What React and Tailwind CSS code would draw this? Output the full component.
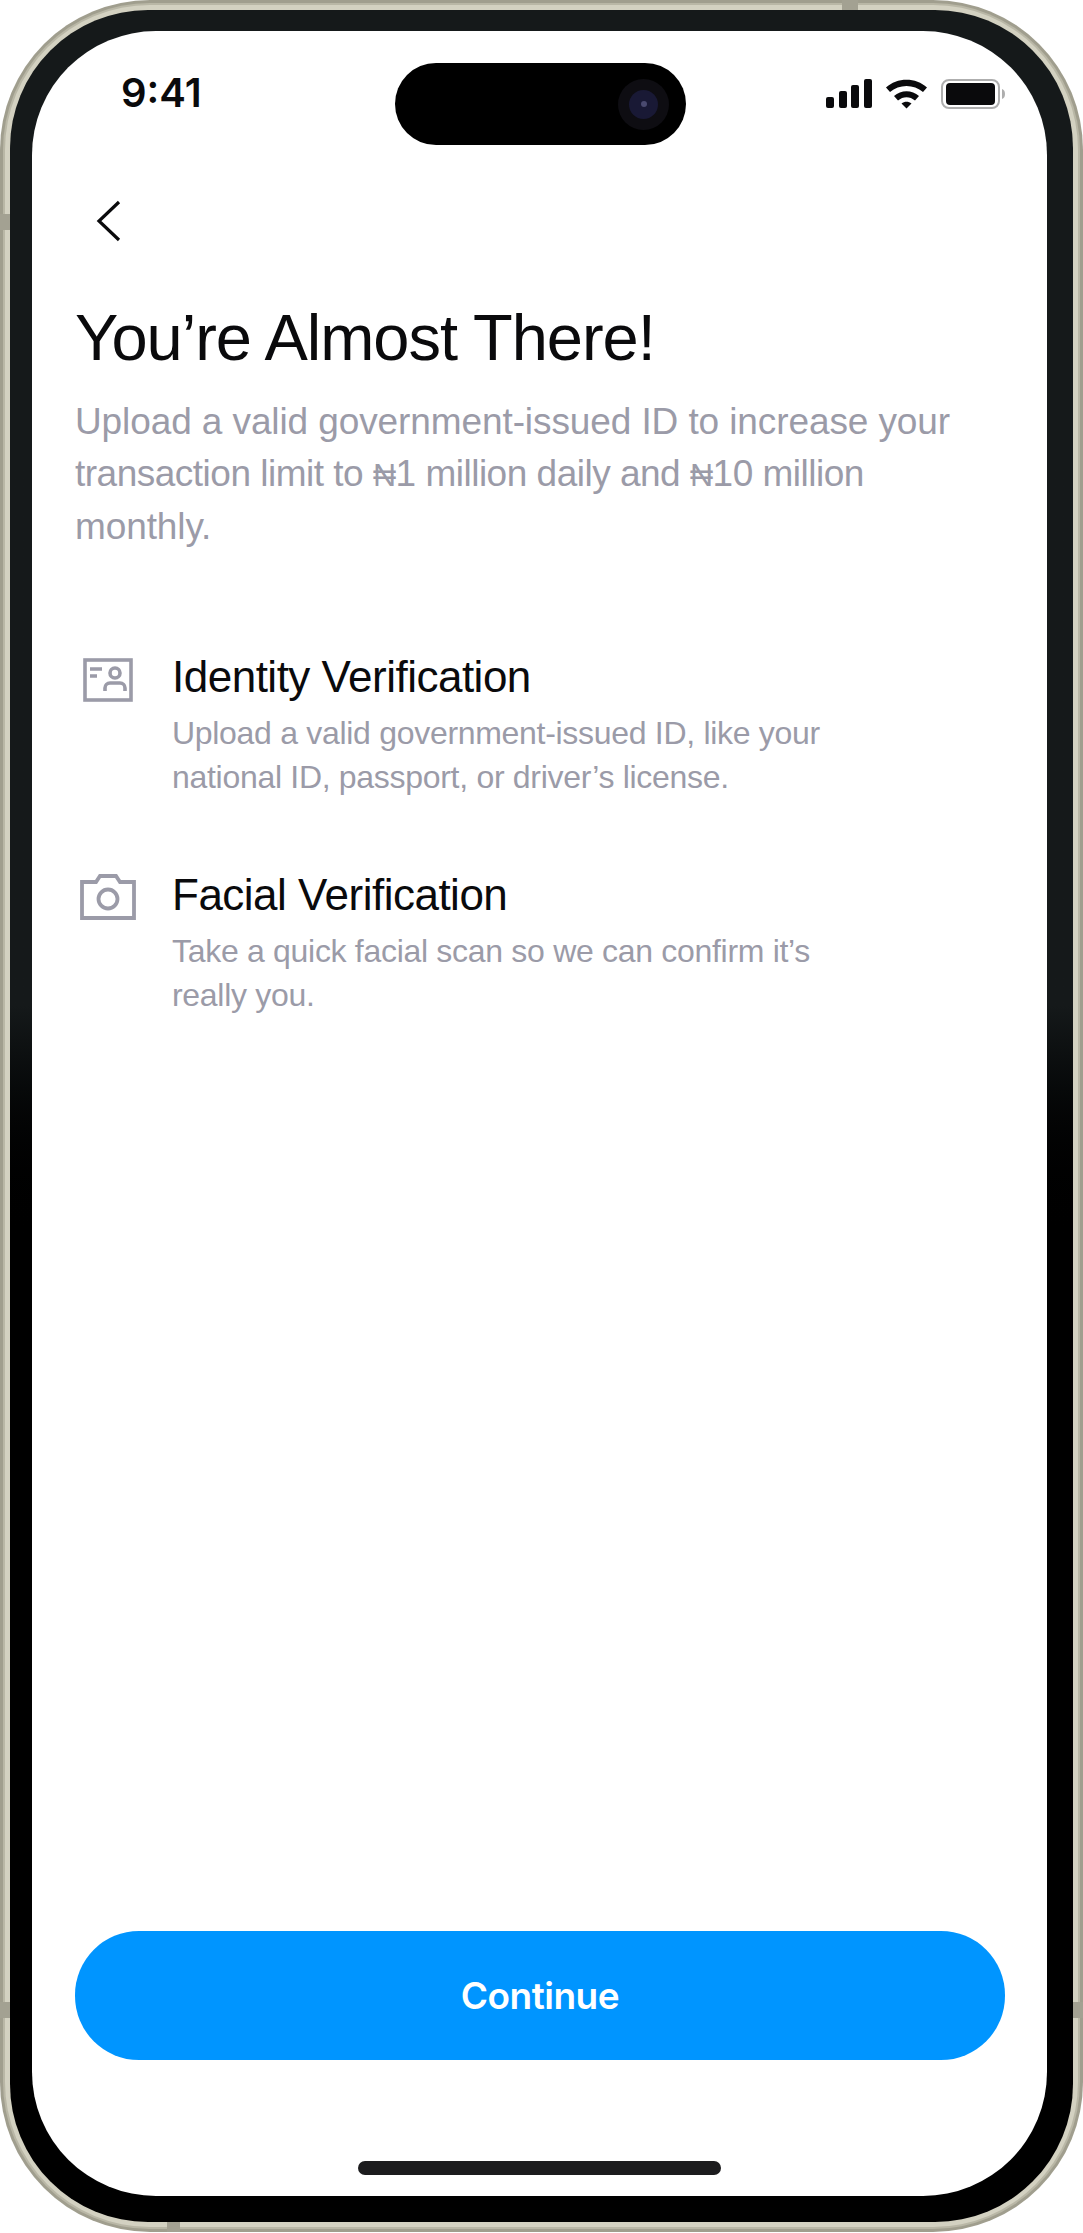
const items = [
  {
    title: "Identity Verification",
    text: "Upload a valid government-issued ID, like your national ID, passport, or driver’s license.",
    icon: "id",
  },
  {
    title: "Facial Verification",
    text: "Take a quick facial scan so we can confirm it’s really you.",
    icon: "camera",
  },
];

const IdIcon = () => (
  <svg className="mt-[2px]" width="50" height="44" viewBox="0 0 50 44" fill="none" stroke="#9b9ba8" strokeWidth="3.600">
    <rect x="2" y="2" width="46" height="40" />
    <path d="M7 11h12M7 18h7" />
    <circle cx="32" cy="15" r="5" />
    <path d="M22 33v-3a5 5 0 0 1 5-5h10a5 5 0 0 1 5 5v3" />
  </svg>
);

const CameraIcon = () => (
  <svg width="56" height="46" viewBox="0 0 56 46" fill="none" stroke="#9b9ba8" strokeWidth="3.800">
    <path d="M2 8h14l4-6h16l4 6h14v36H2z" strokeLinejoin="miter" />
    <circle cx="28" cy="25" r="9.500" />
  </svg>
);

const StatusIcons = () => (
  <svg width="182" height="32" viewBox="0 0 182 32" fill="#0a0a0c">
    <rect x="0" y="19" width="8" height="11" rx="2" />
    <rect x="13" y="13" width="8" height="17" rx="2" />
    <rect x="25" y="7" width="8" height="23" rx="2" />
    <rect x="38" y="1" width="8" height="29" rx="2" />
    <path d="M60 9.500C71 -1 90 -1 101 9.500L97 14C88 6 73 6 64 14Z" />
    <path d="M68 18C75 11.500 86 11.500 93 18L89 22.500C84 18 77 18 72 22.500Z" />
    <path d="M75.500 25.500C78.500 23 82.500 23 85.500 25.500L80.500 30.500Z" />
    <rect x="116" y="2" width="57" height="28" rx="7" fill="none" stroke="#aeaeae" strokeWidth="2" />
    <rect x="120" y="5" width="49" height="22" rx="4" />
    <path d="M176 11c2 .5 3 2.500 3 5s-1 4.500-3 5z" fill="#aeaeae" />
  </svg>
);

const App = () => {
  return (
    <div className="relative h-[2232px] w-[1083px] rounded-[150px] bg-[#a09e8e] p-[3px] font-['Liberation_Sans',sans-serif]">
      <div className="h-full rounded-[147px] bg-[#b9b7a6] p-[2px]">
        <div className="h-full rounded-[145px] bg-[#d3d1c1] p-[5px]">
          <div className="h-full rounded-[138px] bg-gradient-to-b from-[#15191a] from-45% to-black to-56% pb-[26px] pl-[22px] pr-[26px] pt-[21px]">
            <div className="flex h-full flex-col rounded-[124px] bg-white px-[43px] pb-[21px]">
              <div className="-mx-[43px] flex h-[114px] items-start pl-[89px] pr-[39px] pt-[32px]">
                <span className="mt-[7px] w-[274px] font-['Inter',sans-serif] text-[40px] font-semibold leading-[46px] text-[#0a0a0c]">9:41</span>
                <div className="flex h-[82px] w-[291px] items-center justify-end rounded-full bg-black pr-[17px]">
                  <div className="flex h-[51px] w-[51px] items-center justify-center rounded-full bg-[#0e0d12]">
                    <div className="flex h-[29px] w-[29px] items-center justify-center rounded-full bg-[#191935]">
                      <div className="h-[6px] w-[6px] rounded-full bg-[#4a4a70]" />
                    </div>
                  </div>
                </div>
                <div className="ml-[140px] pt-[15px]">
                  <StatusIcons />
                </div>
              </div>

              <svg className="ml-[21px] mt-[54px]" width="26" height="44" viewBox="0 0 26 44" fill="none" stroke="#0a0a0c" strokeWidth="3.200">
                <path d="M23 3 3 22l20 19" />
              </svg>

              <h1 className="mt-[57px] text-[65px] font-normal leading-[76px] tracking-[-1px] text-[#0a0a0c]">You’re Almost There!</h1>
              <p className="mt-[20px] w-[930px] text-[37px] leading-[52px] tracking-[-0.100px] text-[#9b9ba8]">
                Upload a valid government-issued ID to increase your{" "}
                <span className="tracking-[-0.500px]">
                  transaction limit to <span className="text-[32px]">₦</span>1 million daily and <span className="text-[32px]">₦</span>10 million
                </span>{" "}
                monthly.
              </p>

              <div className="mt-[98px] flex flex-col gap-[70px]">
                {items.map((item) => (
                  <div key={item.title} className="flex">
                    <div className="flex w-[97px] justify-center pr-[31px] pt-[5px]">
                      {item.icon === "id" ? <IdIcon /> : <CameraIcon />}
                    </div>
                    <div className="w-[700px]">
                      <div className="text-[44px] leading-[52px] tracking-[-0.500px] text-[#0a0a0c]">{item.title}</div>
                      <p className="mt-[8px] text-[32px] leading-[44px] tracking-[-0.300px] text-[#9b9ba8]">{item.text}</p>
                    </div>
                  </div>
                ))}
              </div>

              <button className="mt-auto flex h-[129px] w-[930px] items-center justify-center rounded-[64px] bg-[#0095ff] font-['Inter',sans-serif] text-[37px] font-semibold tracking-[-0.500px] text-white">
                Continue
              </button>

              <div className="mx-auto mt-[101px] h-[14px] w-[363px] rounded-full bg-[#1c1c1e]" />
            </div>
          </div>
        </div>
      </div>

      {/* antenna bands on the metal frame */}
      <div className="absolute left-[842px] top-0 h-[10px] w-[16px] bg-[#a3a192]" />
      <div className="absolute left-0 top-[214px] h-[16px] w-[10px] bg-[#a3a192]" />
      <div className="absolute left-0 top-[2002px] h-[16px] w-[10px] bg-[#a3a192]" />
      <div className="absolute right-0 top-[2002px] h-[16px] w-[10px] bg-[#a3a192]" />
      <div className="absolute bottom-0 left-[167px] h-[10px] w-[13px] bg-[#a3a192]" />
    </div>
  );
};

export default App;
